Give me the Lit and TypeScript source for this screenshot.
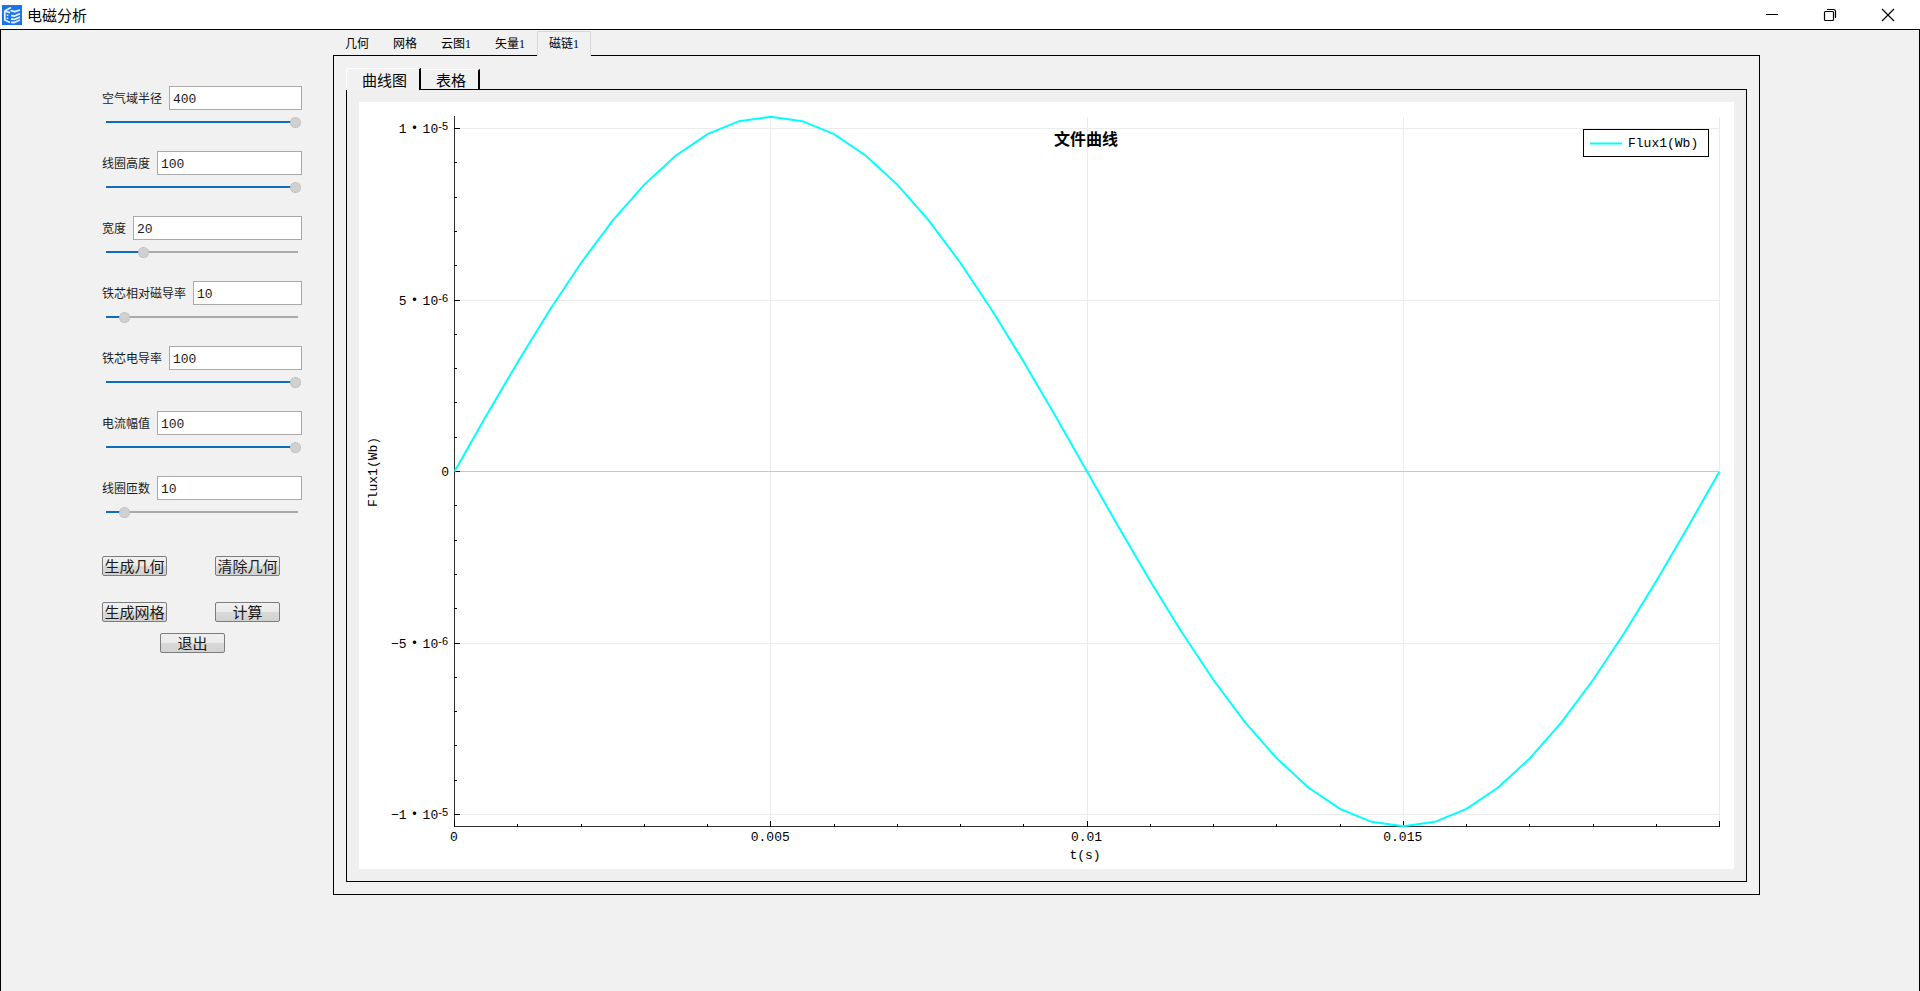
import { LitElement, html, css, svg } from "lit";
import { customElement, state } from "lit/decorators.js";

interface Param {
  id: string;
  label: string;
  value: number;
  max: number;
}

const W = 1375;
const H = 767;
const LEFT = 95;
const RIGHT = 1360;
const TOP = 14;
const BOTTOM = 724;
const ZERO = 369;
const T_MAX = 0.02;
const Y_UNIT = 34.3;
const PEAK = 10.34;

const snap = (n: number) => Math.round(n) + 0.5;
const xAt = (t: number) => LEFT + (t / T_MAX) * (RIGHT - LEFT);
const yAt = (micro: number) => ZERO - micro * Y_UNIT;

@customElement("flux-chart")
export class FluxChart extends LitElement {
  static styles = css`
    :host {
      display: block;
      background: #fff;
    }
    svg {
      display: block;
      width: 100%;
      height: auto;
    }
    text {
      font: 13px "Liberation Mono", "Noto Sans CJK SC", monospace;
      fill: #000;
    }
    .dot {
      font-family: "Noto Sans CJK SC", sans-serif;
      font-size: 16px;
    }
    .exp {
      font-family: "Liberation Sans", sans-serif;
      font-size: 11px;
    }
    .title {
      font: bold 16px "Noto Sans CJK SC", sans-serif;
    }
    .middle {
      text-anchor: middle;
    }
    .end {
      text-anchor: end;
    }
    .grid {
      stroke: #ececec;
    }
    .zero {
      stroke: #c8c8c8;
    }
    .axis {
      stroke: #303030;
    }
    .tick {
      stroke: #000;
    }
    .curve {
      fill: none;
      stroke: #00ffff;
      stroke-width: 2;
    }
    .legend {
      fill: #fff;
      stroke: #000;
    }
  `;

  private yLabel(v: number) {
    const y = Math.round(yAt(v)) + 5;
    if (v === 0) return svg`<text class="end" x="90" y=${y}>0</text>`;
    const sign = v < 0 ? "−" : "";
    const [m, e] = Math.abs(v) === 10 ? ["1", "-5"] : ["5", "-6"];
    return svg`<text class="end" x="89" y=${y}>${sign}${m}<tspan class="dot">·</tspan>10<tspan class="exp" dy="-3">${e}</tspan></text>`;
  }

  render() {
    const majorsX = [0, 0.005, 0.01, 0.015, 0.02];
    const majorsY = [10, 5, 0, -5, -10];
    const ticksX = Array.from({ length: 21 }, (_, i) => i);
    const ticksY = Array.from({ length: 21 }, (_, i) => i - 10);
    const points = Array.from({ length: 41 }, (_, i) => {
      const t = i * 0.0005;
      const v = PEAK * Math.sin((2 * Math.PI * t) / T_MAX);
      return `${(xAt(t) + 0.5).toFixed(1)},${(yAt(v) + 0.5).toFixed(1)}`;
    }).join(" ");
    return html`
      <svg viewBox="0 0 ${W} ${H}" role="img" aria-label="Flux1(Wb)">
        ${majorsX.slice(1).map((t) => svg`<line class="grid" x1=${snap(xAt(t))} x2=${snap(xAt(t))} y1=${TOP + 1} y2=${BOTTOM} />`)}
        ${majorsY.map((v) => svg`<line class=${v === 0 ? "zero" : "grid"} x1=${LEFT} x2=${RIGHT} y1=${snap(yAt(v))} y2=${snap(yAt(v))} />`)}
        <line class="axis" x1=${LEFT + 0.5} x2=${LEFT + 0.5} y1=${TOP} y2=${BOTTOM + 1} />
        <line class="axis" x1=${LEFT} x2=${RIGHT + 1} y1=${BOTTOM + 0.5} y2=${BOTTOM + 0.5} />
        ${ticksX.map((i) => {
          const x = snap(xAt(i / 1000));
          return svg`<line class="tick" x1=${x} x2=${x} y1=${BOTTOM + 1} y2=${BOTTOM - (i % 5 ? 2 : 5)} />`;
        })}
        ${ticksY.map((i) => {
          const y = snap(yAt(i));
          return svg`<line class="tick" x1=${LEFT} x2=${LEFT + (i % 5 ? 3 : 6)} y1=${y} y2=${y} />`;
        })}
        <polyline class="curve" points=${points} />
        ${majorsY.map((v) => this.yLabel(v))}
        ${majorsX.slice(0, 4).map((t) => svg`<text class="middle" x=${xAt(t)} y="739">${t}</text>`)}
        <text class="middle" x="726" y="757">t(s)</text>
        <text class="middle" transform="translate(18 370) rotate(-90)">Flux1(Wb)</text>
        <text class="middle title" x="727" y="43">文件曲线</text>
        <rect class="legend" x="1224.5" y="27.5" width="125" height="27" />
        <line class="curve" x1="1231" x2="1263" y1="41.5" y2="41.5" />
        <text x="1269" y="45">Flux1(Wb)</text>
      </svg>
    `;
  }
}

@customElement("app-root")
export class AppRoot extends LitElement {
  static styles = css`
    :host {
      display: flex;
      flex-direction: column;
      min-height: 100vh;
      box-sizing: border-box;
      background: #f1f1f1;
      color: #000;
      font: 15px "Noto Sans CJK SC", sans-serif;
    }
    *,
    *::before {
      box-sizing: border-box;
    }
    button {
      font: inherit;
      color: inherit;
      margin: 0;
    }
    .titlebar {
      display: flex;
      align-items: center;
      height: 29px;
      padding: 0 3px 0 2px;
      background: #fff;
    }
    .logo {
      width: 20px;
      height: 20px;
      margin-right: 5px;
    }
    .title {
      flex: 1;
      margin: 0;
      font: 15px/20px "Noto Sans CJK SC", sans-serif;
    }
    .winbtn {
      display: grid;
      place-items: center;
      width: 58px;
      height: 29px;
      padding: 0;
      border: 0;
      background: none;
    }
    .winbtn svg {
      width: 14px;
      height: 14px;
      fill: none;
      stroke: #000;
    }
    .client {
      flex: 1;
      display: grid;
      grid-template-columns: 332px minmax(0, 1fr) 159px;
      align-items: start;
      border: solid #000;
      border-width: 1px 1px 0;
    }
    .sidebar {
      display: flex;
      flex-direction: column;
      padding: 56px 31px 0 101px;
    }
    .param {
      height: 65px;
    }
    .field {
      display: flex;
      align-items: center;
      gap: 7px;
    }
    .field label {
      font: 12px/24px "Noto Sans CJK SC", sans-serif;
      color: #1a1a1a;
      white-space: nowrap;
    }
    .box {
      flex: 1;
      min-width: 0;
      height: 24px;
      padding: 2px 3px 0;
      border: 1px solid #a9a9a9;
      background: #fff;
      color: #1a1a1a;
      font: 13px "Liberation Mono", monospace;
      outline: none;
    }
    .slider {
      appearance: none;
      display: block;
      width: calc(100% + 1px);
      height: 11px;
      margin: 7px 0 0 -2px;
      background: linear-gradient(to right, #0f6cbd var(--fill), #a9a9a9 var(--fill)) 6px 4px / calc(100% - 9px) 2px no-repeat;
    }
    .slider::-webkit-slider-thumb {
      appearance: none;
      width: 11px;
      height: 11px;
      border: 1px dotted #b4b4b4;
      border-radius: 50%;
      background: #d0d0d0;
    }
    .actions {
      display: grid;
      grid-template-columns: 65px 65px;
      gap: 26px 48px;
      padding-top: 15px;
    }
    .push {
      width: 65px;
      height: 20px;
      padding: 0;
      border: 1px solid #7c7c7c;
      border-radius: 2px;
      background: linear-gradient(#f0f0f0, #ebebeb 48%, #d9d9d9 52%, #d2d2d2);
      color: #1a1a1a;
      line-height: 18px;
      white-space: nowrap;
    }
    .exit {
      margin: 11px 0 0 58px;
    }
    .tabs {
      display: flex;
      height: 25px;
    }
    .tab {
      position: relative;
      margin-top: 1px;
      padding: 1px 11px 0;
      border: 1px solid transparent;
      border-bottom: 0;
      background: none;
      font: 12px/23px "Liberation Serif", "Noto Sans CJK SC", serif;
    }
    .tab[aria-selected="true"] {
      height: 25px;
      border-color: #d9d9d9;
      background: #f1f1f1;
    }
    .panel {
      border: 1px solid #000;
      padding: 12px;
    }
    .subtabs {
      display: flex;
      align-items: flex-end;
      height: 21px;
    }
    .subtab {
      position: relative;
      height: 20px;
      padding: 0 12px 0 15px;
      border: solid;
      border-width: 1px 2px 0 0;
      border-color: #fff #000 #fff #fff;
      background: #f1f1f1;
      line-height: 18px;
    }
    .subtab[aria-selected="true"] {
      height: 22px;
      margin-bottom: -1px;
      border-left-width: 1px;
      border-top-left-radius: 3px;
    }
    .subpanel {
      border: 1px solid #000;
      padding: 12px;
      background: #efefef;
    }
  `;

  @state() private params: Param[] = [
    { id: "radius", label: "空气域半径", value: 400, max: 400 },
    { id: "height", label: "线圈高度", value: 100, max: 100 },
    { id: "width", label: "宽度", value: 20, max: 100 },
    { id: "mu", label: "铁芯相对磁导率", value: 10, max: 100 },
    { id: "sigma", label: "铁芯电导率", value: 100, max: 100 },
    { id: "current", label: "电流幅值", value: 100, max: 100 },
    { id: "turns", label: "线圈匝数", value: 10, max: 100 },
  ];
  @state() private tab = 4;

  private setValue(index: number, e: Event) {
    const value = Number((e.target as HTMLInputElement).value) || 0;
    this.params = this.params.map((p, i) => (i === index ? { ...p, value } : p));
  }

  private renderParam(p: Param, i: number) {
    return html`
      <div class="param">
        <div class="field">
          <label for=${p.id}>${p.label}</label>
          <input class="box" id=${p.id} type="text" .value=${String(p.value)} @change=${(e: Event) => this.setValue(i, e)} />
        </div>
        <input
          class="slider"
          type="range"
          min="0"
          max=${p.max}
          aria-label=${p.label}
          .value=${String(p.value)}
          style="--fill:${(p.value / p.max) * 100}%"
          @input=${(e: Event) => this.setValue(i, e)}
        />
      </div>
    `;
  }

  render() {
    const tabs = ["几何", "网格", "云图1", "矢量1", "磁链1"];
    return html`
      <header class="titlebar">
        <svg class="logo" viewBox="0 0 20 20" aria-hidden="true">
          <rect width="20" height="20" fill="#1a73e8" />
          <path d="M2.500 6 9 2.500M2.800 6v9l5.200 2.500M3 6.200l5 1.500" fill="none" stroke="#e4eefc" stroke-width="1.800" />
          <path d="M5.500 9.500v1.500M5.500 12.500v1.500" stroke="#e4eefc" stroke-width="1.600" />
          <path d="M8.500 5.500l4 1.200L18 5M9 10.700l3.500.3L18 8.700M9 14l3.500.3L18 12.200M9 17.300l3 .2 6-2.500" fill="none" stroke="#e4eefc" stroke-width="1.800" />
        </svg>
        <h1 class="title">电磁分析</h1>
        <button class="winbtn" aria-label="最小化"><svg viewBox="0 0 14 14"><path d="M1 6.500h12" /></svg></button>
        <button class="winbtn" aria-label="还原">
          <svg viewBox="0 0 14 14"><rect x="1.500" y="3.500" width="9" height="9" rx="1" stroke-width="1.200" /><path d="M4 1.500h6.500a2 2 0 0 1 2 2V10" stroke-width="1.200" /></svg>
        </button>
        <button class="winbtn" aria-label="关闭"><svg viewBox="0 0 14 14"><path d="M1 1l12 12M13 1 1 13" stroke-width="1.200" /></svg></button>
      </header>
      <main class="client">
        <section class="sidebar">
          ${this.params.map((p, i) => this.renderParam(p, i))}
          <div class="actions">
            <button class="push">生成几何</button>
            <button class="push">清除几何</button>
            <button class="push">生成网格</button>
            <button class="push">计算</button>
          </div>
          <button class="push exit">退出</button>
        </section>
        <section>
          <div class="tabs" role="tablist">
            ${tabs.map((t, i) => html`<button class="tab" role="tab" aria-selected=${i === this.tab} @click=${() => (this.tab = i)}>${t}</button>`)}
          </div>
          <div class="panel">
            <div class="subtabs" role="tablist">
              <button class="subtab" role="tab" aria-selected="true">曲线图</button>
              <button class="subtab" role="tab" aria-selected="false">表格</button>
            </div>
            <div class="subpanel"><flux-chart></flux-chart></div>
          </div>
        </section>
      </main>
    `;
  }
}
